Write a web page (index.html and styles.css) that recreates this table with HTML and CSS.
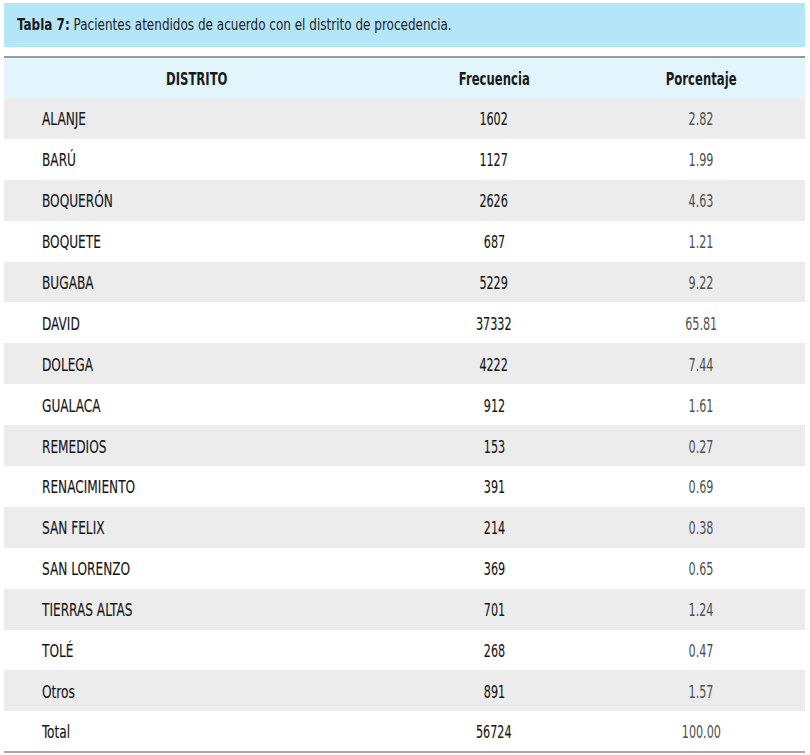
FILE: index.html
```html
<!DOCTYPE html>
<html lang="es">
<head>
<meta charset="utf-8">
<title>Tabla 7</title>
<link rel="stylesheet" href="styles.css">
</head>
<body>
<div class="page">
  <div class="caption"><span class="t"><b>Tabla 7:</b> Pacientes atendidos de acuerdo con el distrito de procedencia.</span></div>
  <table class="data">
    <thead>
      <tr><th class="c1"><span class="t">DISTRITO</span></th><th class="c2"><span class="t">Frecuencia</span></th><th class="c3"><span class="t">Porcentaje</span></th></tr>
    </thead>
    <tbody>
      <tr class="odd"><td class="c1"><span class="t">ALANJE</span></td><td class="c2"><span class="t">1602</span></td><td class="c3"><span class="t">2.82</span></td></tr>
      <tr><td class="c1"><span class="t">BARÚ</span></td><td class="c2"><span class="t">1127</span></td><td class="c3"><span class="t">1.99</span></td></tr>
      <tr class="odd"><td class="c1"><span class="t">BOQUERÓN</span></td><td class="c2"><span class="t">2626</span></td><td class="c3"><span class="t">4.63</span></td></tr>
      <tr><td class="c1"><span class="t">BOQUETE</span></td><td class="c2"><span class="t">687</span></td><td class="c3"><span class="t">1.21</span></td></tr>
      <tr class="odd"><td class="c1"><span class="t">BUGABA</span></td><td class="c2"><span class="t">5229</span></td><td class="c3"><span class="t">9.22</span></td></tr>
      <tr><td class="c1"><span class="t">DAVID</span></td><td class="c2"><span class="t">37332</span></td><td class="c3"><span class="t">65.81</span></td></tr>
      <tr class="odd"><td class="c1"><span class="t">DOLEGA</span></td><td class="c2"><span class="t">4222</span></td><td class="c3"><span class="t">7.44</span></td></tr>
      <tr><td class="c1"><span class="t">GUALACA</span></td><td class="c2"><span class="t">912</span></td><td class="c3"><span class="t">1.61</span></td></tr>
      <tr class="odd"><td class="c1"><span class="t">REMEDIOS</span></td><td class="c2"><span class="t">153</span></td><td class="c3"><span class="t">0.27</span></td></tr>
      <tr><td class="c1"><span class="t">RENACIMIENTO</span></td><td class="c2"><span class="t">391</span></td><td class="c3"><span class="t">0.69</span></td></tr>
      <tr class="odd"><td class="c1"><span class="t">SAN FELIX</span></td><td class="c2"><span class="t">214</span></td><td class="c3"><span class="t">0.38</span></td></tr>
      <tr><td class="c1"><span class="t">SAN LORENZO</span></td><td class="c2"><span class="t">369</span></td><td class="c3"><span class="t">0.65</span></td></tr>
      <tr class="odd"><td class="c1"><span class="t">TIERRAS ALTAS</span></td><td class="c2"><span class="t">701</span></td><td class="c3"><span class="t">1.24</span></td></tr>
      <tr><td class="c1"><span class="t">TOLÉ</span></td><td class="c2"><span class="t">268</span></td><td class="c3"><span class="t">0.47</span></td></tr>
      <tr class="odd"><td class="c1"><span class="t">Otros</span></td><td class="c2"><span class="t">891</span></td><td class="c3"><span class="t">1.57</span></td></tr>
      <tr class="total"><td class="c1"><span class="t">Total</span></td><td class="c2"><span class="t">56724</span></td><td class="c3"><span class="t">100.00</span></td></tr>
    </tbody>
  </table>
</div>
</body>
</html>
```

FILE: styles.css
```css
html, body {
  margin: 0;
  padding: 0;
  background: #ffffff;
}
body {
  font-family: "DejaVu Sans Condensed", "DejaVu Sans", sans-serif;
  color: #1f1f1f;
}
.page {
  padding: 3px 5px 0 4px;
  width: 801px;
}
.t {
  display: inline-block;
  white-space: nowrap;
  transform: scaleX(0.72);
  transform-origin: center center;
}
.caption {
  background: #b5e6f8;
  height: 44px;
  line-height: 44px;
  padding-left: 13px;
  font-size: 16.5px;
  color: #222;
  box-sizing: border-box;
}
.caption .t {
  transform: scaleX(0.81);
  transform-origin: left center;
}
.caption b {
  font-weight: bold;
  color: #1a1a1a;
}
.data {
  margin-top: 9px;
  width: 801px;
  border-collapse: collapse;
  table-layout: fixed;
  border-top: 2px solid #9a9a9a;
  border-bottom: 2px solid #a8a8a8;
}
.data th, .data td {
  box-sizing: border-box;
  height: 40.9px;
  padding: 1px 0 0 0;
  vertical-align: middle;
  font-size: 18px;
}
.data th {
  background: #e2f5fc;
  font-weight: bold;
  text-align: center;
  color: #1a1a1a;
  height: 41px;
}
.data .c1 { width: 386px; }
.data .c2 { width: 208px; }
.data .c3 { width: 207px; }
.data td.c1 {
  padding-left: 38px;
  text-align: left;
  color: #161616;
  -webkit-text-stroke: 0.15px #161616;
}
.data td.c1 .t {
  transform: scaleX(0.75);
  transform-origin: left center;
}
.data td.c2 {
  text-align: center;
  color: #161616;
  -webkit-text-stroke: 0.12px #161616;
}
.data td.c2 .t, .data td.c3 .t {
  transform: scaleX(0.69);
}
.data td.c3 {
  text-align: center;
  color: #505050;
}
.data tr.odd td {
  background: #ececec;
}
.data tr.total td {
  background: #ffffff;
}
```
